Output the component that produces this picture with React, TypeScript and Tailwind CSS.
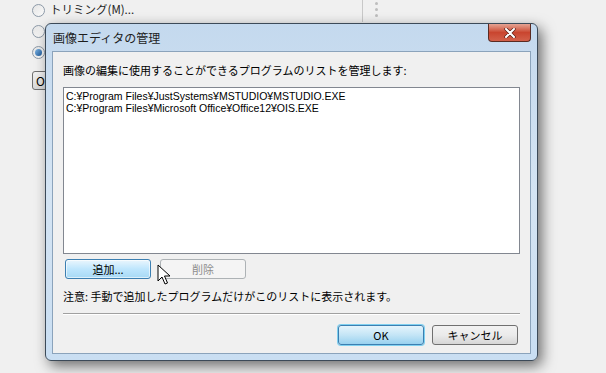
import React from 'react';

const jp = { fontFamily: '"Noto Sans CJK JP", "Noto Sans", sans-serif' };
const latin = { fontFamily: '"Liberation Sans", "Noto Sans CJK JP", sans-serif' };

function Radio({ checked }: { checked?: boolean }) {
  return (
    <span className="flex h-[13px] w-[13px] items-center justify-center rounded-full border border-[#8d9aa8] bg-gradient-to-br from-[#e4e4e4] to-[#fbfbfb]">
      {checked && <span className="h-[7px] w-[7px] rounded-full bg-gradient-to-br from-[#7fb6e6] to-[#1b5a99]" />}
    </span>
  );
}

function Cursor() {
  return (
    <svg width="14" height="22" viewBox="0 0 14 22" className="absolute left-[157px] top-[264px]">
      <path d="M1 1 L1 17 L5 13 L8 20 L10.5 19 L7.5 12 L13 12 Z" fill="#fff" stroke="#000" strokeWidth="1" strokeLinejoin="round" />
    </svg>
  );
}

export default function App() {
  return (
    <div className="relative h-[373px] w-[606px] overflow-hidden bg-[#f0f0f0] text-[11px] text-black" style={jp}>
      {/* background window contents */}
      <div className="flex flex-col gap-[7px] pl-[32px] pt-[3px]">
        <div className="flex h-[14px] items-center gap-[5px]">
          <Radio />
          <span className="text-[11.5px] text-[#222]">トリミング(M)...</span>
        </div>
        <div className="flex h-[14px] items-center gap-[5px]">
          <Radio />
        </div>
        <div className="flex h-[14px] items-center gap-[5px]">
          <Radio checked />
        </div>
        <div className="mt-[5px] flex h-[19px] w-[40px] items-center rounded-[3px] border border-[#707070] bg-gradient-to-b from-[#f2f2f2] to-[#d8d8d8] pl-[3px] text-[12px]">O</div>
      </div>
      <div className="absolute left-[362px] top-0 h-[22px] w-px bg-[#c8c8c8]" />
      <div className="absolute left-[375px] top-[2px] flex flex-col gap-[3px]">
        <span className="h-[3px] w-[3px] rounded-full bg-[#bdbdbd]" />
        <span className="h-[3px] w-[3px] rounded-full bg-[#bdbdbd]" />
        <span className="h-[3px] w-[3px] rounded-full bg-[#bdbdbd]" />
      </div>

      {/* dialog */}
      <div className="absolute left-[45px] top-[23px] flex h-[338px] w-[493px] flex-col rounded-[6px] border border-[#3c4a58] bg-gradient-to-b from-[#c4d9ee] via-[#d4e4f3] to-[#c9def2] px-[6px] pb-[6px] shadow-[4px_5px_14px_rgba(0,0,0,0.55)]">
        <div className="flex h-[27px] items-center justify-between">
          <span className="pl-[1px] pt-[1px] text-[12px] text-[#1e1e1e]">画像エディタの管理</span>
          <div className="flex h-[18px] w-[43px] items-center justify-center self-start rounded-b-[4px] border border-t-0 border-[#5a2b22] bg-gradient-to-b from-[#e4a393] via-[#c9452f] to-[#d2604a]">
            <svg width="12" height="10" viewBox="0 0 12 10">
              <path d="M2 1 L10 9 M10 1 L2 9" stroke="#5a2018" strokeWidth="3.4" strokeLinecap="round" />
              <path d="M2 1 L10 9 M10 1 L2 9" stroke="#fff" strokeWidth="2" strokeLinecap="round" />
            </svg>
          </div>
        </div>
        <div className="flex flex-1 flex-col border border-[#8ba3bb] bg-[#f0f0f0] px-[10px]">
          <div className="mt-[11px] h-[14px] leading-[14px]">画像の編集に使用することができるプログラムのリストを管理します:</div>
          <div className="mt-[10px] flex h-[167px] flex-col border border-[#828790] bg-white px-[2px] pt-[2px] text-[10.5px] leading-[12px]" style={latin}>
            <div>C:¥Program Files¥JustSystems¥MSTUDIO¥MSTUDIO.EXE</div>
            <div>C:¥Program Files¥Microsoft Office¥Office12¥OIS.EXE</div>
          </div>
          <div className="mt-[5px] flex gap-[9px] pl-[2px]">
            <div className="flex h-[20px] w-[86px] items-center justify-center rounded-[3px] border border-[#3c7fb1] bg-gradient-to-b from-[#eaf6fd] via-[#bee6fd] to-[#a7d9f5] shadow-[inset_0_0_0_1px_rgba(255,255,255,0.6)]">追加...</div>
            <div className="flex h-[20px] w-[86px] items-center justify-center rounded-[3px] border border-[#adb2b5] bg-[#f4f4f4] text-[#8d8d8d]">削除</div>
          </div>
          <div className="mt-[10px] h-[14px] leading-[14px]">注意: 手動で追加したプログラムだけがこのリストに表示されます。</div>
          <div className="mt-[10px] h-px bg-[#a0a0a0] shadow-[0_1px_0_#fff]" />
          <div className="mt-[11px] flex justify-end gap-[8px] pr-[2px]">
            <div className="flex h-[20px] w-[86px] items-center justify-center rounded-[3px] border border-[#3c7fb1] bg-gradient-to-b from-[#e5f4fc] via-[#c4e5f6] to-[#98d1ef] shadow-[0_0_0_1px_#7fd0f0]">OK</div>
            <div className="flex h-[20px] w-[86px] items-center justify-center rounded-[3px] border border-[#707070] bg-gradient-to-b from-[#f2f2f2] via-[#ebebeb] to-[#d6d6d6]">キャンセル</div>
          </div>
        </div>
      </div>
      <Cursor />
    </div>
  );
}
